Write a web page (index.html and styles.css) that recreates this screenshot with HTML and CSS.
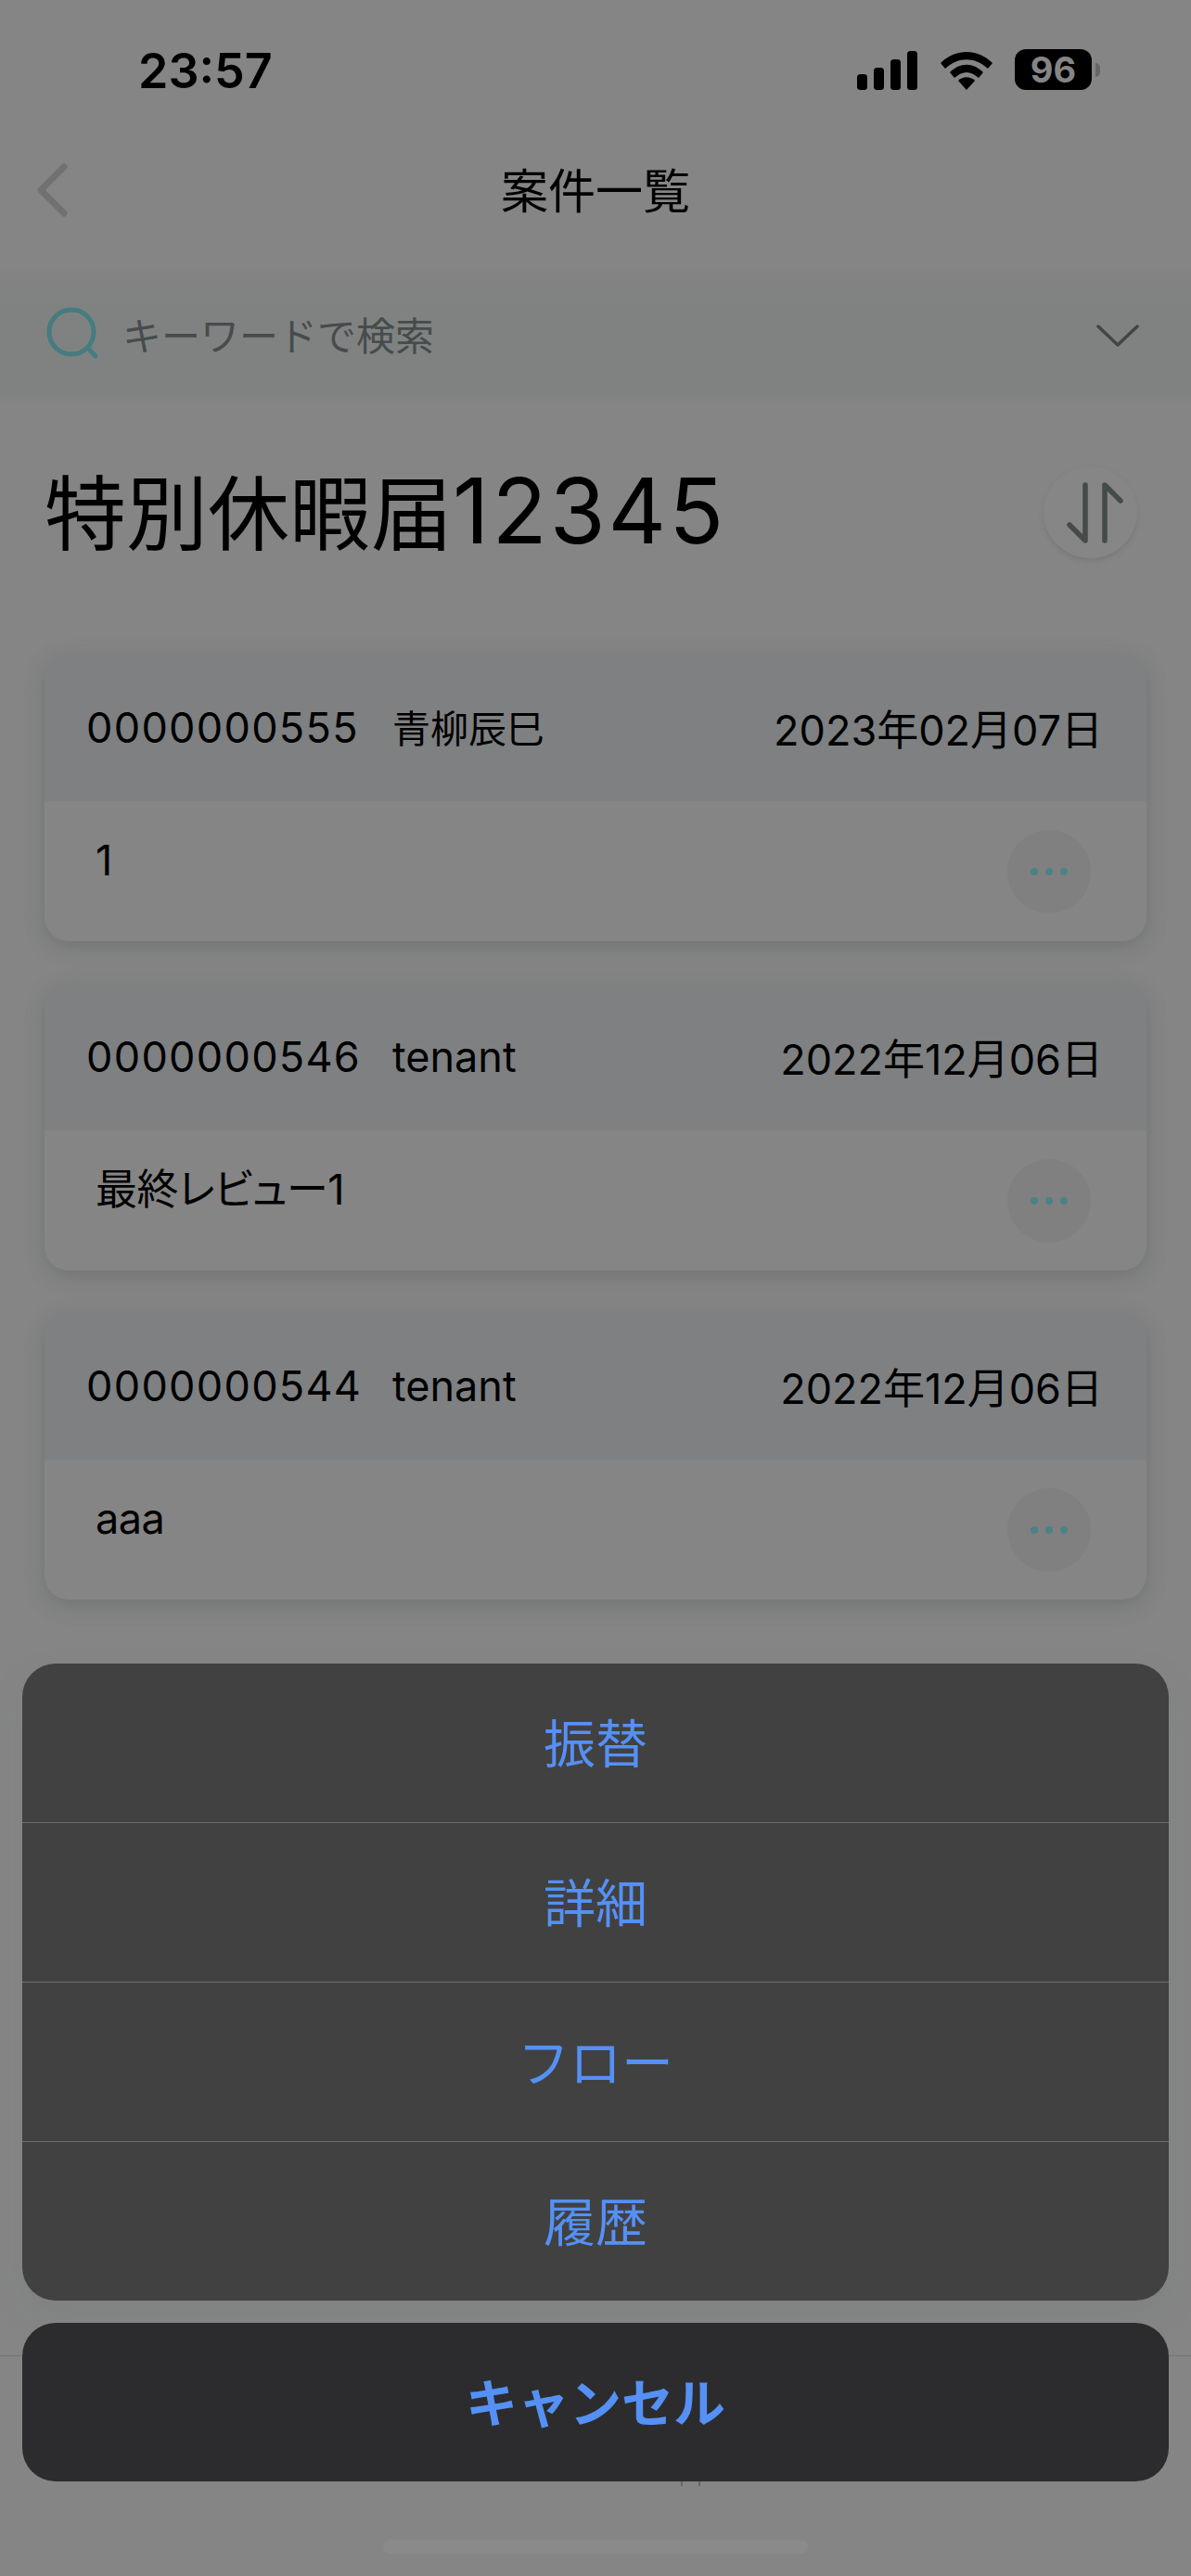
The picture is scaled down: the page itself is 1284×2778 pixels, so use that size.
FILE: index.html
```html
<!DOCTYPE html>
<html lang="ja">
<head>
  <meta charset="utf-8">
  <title>案件一覧</title>
  <link rel="stylesheet" href="styles.css">
</head>
<body>
  <div class="page">
    <div class="status-bar">
      <div class="time">23:57</div>
      <div class="status-icons">
        <svg class="signal" width="66" height="42" viewBox="0 0 66 42">
          <rect x="0" y="25" width="11" height="17" rx="3.5"/>
          <rect x="18" y="18" width="11" height="24" rx="3.5"/>
          <rect x="36" y="9" width="11" height="33" rx="3.5"/>
          <rect x="54" y="0" width="11" height="42" rx="3.5"/>
        </svg>
        <svg class="wifi" width="58" height="42" viewBox="0 0 58 42">
          <path d="M1 13 C17 -3 41 -3 57 13 L52 19 C38 6 20 6 6 19 Z"/>
          <path d="M11 23 C22 12 36 12 47 23 L42 29 C33 21 25 21 16 29 Z"/>
          <path d="M20 32 C25 27 33 27 38 32 L29 42 Z"/>
        </svg>
        <div class="battery">
          <div class="battery-body">96</div>
          <div class="battery-cap"></div>
        </div>
      </div>
    </div>

    <div class="nav">
      <svg class="back" width="34" height="58" viewBox="0 0 34 58">
        <path d="M29 4 L4 29 L29 54"/>
      </svg>
      <div class="nav-title">案件一覧</div>
    </div>

    <div class="search">
      <svg class="search-icon" width="62" height="62" viewBox="0 0 62 62">
        <circle cx="29" cy="27" r="24"/>
        <path d="M49 47 L55 53"/>
      </svg>
      <div class="search-text">キーワードで検索</div>
      <svg class="chevron" width="46" height="26" viewBox="0 0 46 26">
        <path d="M2 3 L23 23 L44 3"/>
      </svg>
    </div>

    <div class="title-row">
      <div class="title">特別休暇届<span class="title-no">12345</span></div>
      <div class="sort-btn">
        <svg width="62" height="68" viewBox="0 0 62 68">
          <path d="M25 4 V64 L8 47"/>
          <path d="M46 64 V4 L63 21"/>
        </svg>
      </div>
    </div>

    <div class="cards">
      <div class="card">
        <div class="card-head">
          <span class="case-no">0000000555</span>
          <span class="case-user case-user-ja">青柳辰巳</span>
          <span class="case-date">2023年02月07日</span>
        </div>
        <div class="card-body">
          <div class="case-name">1</div>
          <div class="more"><i></i><i></i><i></i></div>
        </div>
      </div>
      <div class="card">
        <div class="card-head">
          <span class="case-no">0000000546</span>
          <span class="case-user">tenant</span>
          <span class="case-date">2022年12月06日</span>
        </div>
        <div class="card-body">
          <div class="case-name">最終レビュー1</div>
          <div class="more"><i></i><i></i><i></i></div>
        </div>
      </div>
      <div class="card">
        <div class="card-head">
          <span class="case-no">0000000544</span>
          <span class="case-user">tenant</span>
          <span class="case-date">2022年12月06日</span>
        </div>
        <div class="card-body">
          <div class="case-name">aaa</div>
          <div class="more"><i></i><i></i><i></i></div>
        </div>
      </div>
    </div>

    <div class="tab-bar">
      <div class="tab-icon"></div>
    </div>

    <div class="sheet">
      <div class="sheet-group">
        <div class="sheet-item">振替</div>
        <div class="sheet-item">詳細</div>
        <div class="sheet-item">フロー</div>
        <div class="sheet-item">履歴</div>
      </div>
      <div class="sheet-cancel">キャンセル</div>
    </div>

    <div class="home-bar"></div>
  </div>
</body>
</html>
```

FILE: styles.css
```css
body {
  margin: 0;
  background: #858585;
  font-family: "Inter", "Noto Sans CJK JP", sans-serif;
  color: #000;
}
.page {
  position: relative;
  width: 1284px;
  height: 2778px;
  overflow: hidden;
  display: flex;
  flex-direction: column;
  background: #858585;
}

/* status bar */
.status-bar {
  height: 150px;
  flex: none;
  box-sizing: border-box;
  padding: 52px 98px 0 149px;
  display: flex;
  justify-content: space-between;
  align-items: flex-start;
}
.time {
  font-size: 52px;
  font-weight: 600;
  line-height: 50px;
}
.status-icons {
  display: flex;
  align-items: flex-start;
  gap: 23px;
  padding-top: 1px;
}
.signal, .wifi {
  fill: #000;
  margin-top: 2px;
}
.battery {
  display: flex;
  align-items: center;
  gap: 4px;
}
.battery-body {
  width: 83px;
  height: 44px;
  background: #000;
  border-radius: 12px;
  color: #858585;
  font-size: 38px;
  font-weight: 700;
  line-height: 44px;
  text-align: center;
}
.battery-cap {
  width: 5px;
  height: 15px;
  background: #666;
  border-radius: 0 8px 8px 0;
}

/* nav */
.nav {
  height: 110px;
  flex: none;
  display: flex;
  align-items: center;
  justify-content: center;
  position: relative;
}
.back {
  position: absolute;
  left: 40px;
  top: 26px;
  fill: none;
  stroke: #717171;
  stroke-width: 7;
  stroke-linecap: round;
  stroke-linejoin: round;
}
.nav-title {
  font-size: 51px;
  line-height: 60px;
  padding-top: 3px;
}

/* search */
.search {
  margin-top: 28px;
  height: 148px;
  flex: none;
  box-sizing: border-box;
  padding: 0 56px 0 48px;
  display: flex;
  align-items: center;
  background: linear-gradient(#838483, #808281 25%, #808281 90%, #838483);
}
.search-icon {
  fill: none;
  stroke: #457c80;
  stroke-width: 5;
  stroke-linecap: round;
  margin-right: 22px;
}
.search-text {
  flex: 1;
  font-size: 42px;
  color: #464c4c;
  margin-top: -5px;
}
.chevron {
  fill: none;
  stroke: #444;
  stroke-width: 3.5;
  stroke-linecap: round;
  stroke-linejoin: round;
}

/* title */
.title-row {
  margin-top: 64px;
  height: 105px;
  flex: none;
  box-sizing: border-box;
  padding: 0 58px 0 48px;
  display: flex;
  align-items: center;
  justify-content: space-between;
}
.title {
  font-size: 88px;
  line-height: 105px;
}
.title-no {
  font-size: 97px;
  letter-spacing: 3px;
}
.sort-btn {
  width: 101px;
  height: 99px;
  border-radius: 50%;
  background: #868686;
  box-shadow: 0 3px 5px rgba(90, 100, 100, 0.3);
  display: flex;
  align-items: center;
  justify-content: center;
}
.sort-btn svg {
  fill: none;
  stroke: #454a4a;
  stroke-width: 5.5;
  stroke-linecap: round;
  stroke-linejoin: round;
  overflow: visible;
}

/* cards */
.cards {
  margin: 100px 48px 0;
  display: flex;
  flex-direction: column;
  gap: 45px;
}
.card {
  height: 310px;
  border-radius: 26px;
  overflow: hidden;
  background: #858585;
  box-shadow: 0 6px 22px rgba(70, 80, 80, 0.3);
}
.card-head {
  height: 159px;
  box-sizing: border-box;
  padding: 0 47px 0 45px;
  display: flex;
  align-items: center;
  background: #7e8082;
  font-size: 45px;
}
.case-no {
  width: 330px;
  letter-spacing: 1.3px;
}
.case-user {
  flex: 1;
}
.case-user-ja {
  font-size: 41px;
  margin-top: -3px;
}
.card-body {
  height: 151px;
  box-sizing: border-box;
  padding: 0 60px 0 55px;
  display: flex;
  align-items: center;
  justify-content: space-between;
}
.case-name {
  font-size: 45px;
  line-height: 60px;
  margin-top: -23px;
  font-feature-settings: "palt";
  letter-spacing: -0.5px;
}
.more {
  width: 90px;
  height: 90px;
  border-radius: 50%;
  background: #808080;
  display: flex;
  align-items: center;
  justify-content: center;
  gap: 8px;
}
.more i {
  width: 8px;
  height: 8px;
  border-radius: 50%;
  background: #4a8286;
}

/* bottom */
.tab-bar {
  margin-top: auto;
  height: 237px;
  flex: none;
  position: relative;
  border-top: 1px solid #757575;
}
.tab-icon {
  position: absolute;
  left: 734px;
  top: 120px;
  width: 17px;
  height: 20px;
  border-left: 2px solid #666;
  border-right: 2px solid #666;
}
.home-bar {
  position: absolute;
  left: 413px;
  top: 2739px;
  width: 458px;
  height: 15px;
  border-radius: 8px;
  background: #8a8a8a;
}

/* action sheet */
.sheet {
  position: absolute;
  left: 24px;
  right: 24px;
  top: 1794px;
  display: flex;
  flex-direction: column;
  gap: 24px;
}
.sheet-group {
  border-radius: 36px;
  overflow: hidden;
  background: #414141;
  box-shadow: 0 16px 30px rgba(120, 130, 130, 0.35);
}
.sheet-item {
  height: 172px;
  box-sizing: border-box;
  padding-bottom: 6px;
  display: flex;
  align-items: center;
  justify-content: center;
  font-size: 56px;
  color: #5590f5;
  border-top: 1px solid #6e6e6e;
}
.sheet-item:first-child {
  height: 171px;
  border-top: none;
}
.sheet-cancel {
  height: 171px;
  box-sizing: border-box;
  padding-bottom: 6px;
  border-radius: 36px;
  background: #2c2c2e;
  display: flex;
  align-items: center;
  justify-content: center;
  font-size: 56px;
  font-weight: 700;
  color: #5590f5;
}
```
